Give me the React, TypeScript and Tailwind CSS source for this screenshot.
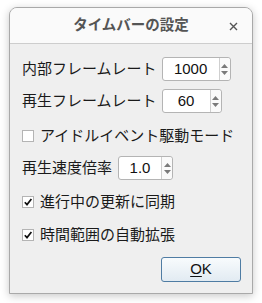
import React from "react";

const font = { fontFamily: '"Liberation Sans", "Noto Sans CJK JP", sans-serif' };

function Spin({ value, w, textW }: { value: string; w: number; textW: number }) {
  return (
    <div
      className="flex h-[24px] rounded-[3px] border border-[#b4b4b4] bg-white box-border"
      style={{ width: w }}
    >
      <div className="flex items-center justify-center text-[15px] text-[#111]" style={{ width: textW }}>
        {value}
      </div>
      <div className="flex flex-1 flex-col items-center justify-center gap-[3px] border-l border-[#cfcfcf] bg-[#fafafa] rounded-r-[3px]">
        <svg width="7" height="4" viewBox="0 0 7 4">
          <path d="M0 4 L3.5 0 L7 4 Z" fill="#7a7a7a" />
        </svg>
        <svg width="7" height="4" viewBox="0 0 7 4">
          <path d="M0 0 L3.5 4 L7 0 Z" fill="#7a7a7a" />
        </svg>
      </div>
    </div>
  );
}

function Check({ checked, label }: { checked: boolean; label: string }) {
  return (
    <div className="flex h-[24px] items-center">
      <div className="flex h-[12px] w-[12px] items-center justify-center border border-[#b4b4b4] bg-white box-border">
        {checked && (
          <svg width="10" height="10" viewBox="0 0 10 10">
            <path d="M1.8 5.2 L4 7.6 L8.4 2" stroke="#111" strokeWidth="1.7" fill="none" />
          </svg>
        )}
      </div>
      <span className="ml-[6px] text-[15px] text-[#1a1a1a]">{label}</span>
    </div>
  );
}

export default function App() {
  return (
    <div className="h-[303px] w-[262px] bg-white pt-[7px] pl-[9px]" style={font}>
      <div className="box-border flex h-[287px] w-[244px] flex-col overflow-hidden rounded-t-[8px] border border-[#a9a9a9] bg-[#efefef] shadow-[0_2px_9px_rgba(0,0,0,0.22)]">
        <div className="relative flex h-[36px] shrink-0 items-center justify-center border-b border-[#cdcdcd] bg-[#fafafa]">
          <span className="text-[14.5px] font-bold text-[#555]">タイムバーの設定</span>
          <svg className="absolute right-[14px] top-[14px]" width="9" height="9" viewBox="0 0 9 9">
            <path d="M1 1 L8 8 M8 1 L1 8" stroke="#555" strokeWidth="1.4" />
          </svg>
        </div>
        <div className="flex flex-col pl-[12px] pt-[13px] text-[#1a1a1a]">
          <div className="flex h-[24px] items-center">
            <span className="text-[15px]">内部フレームレート</span>
            <div className="ml-[5px]">
              <Spin value="1000" w={69} textW={56} />
            </div>
          </div>
          <div className="mt-[8px] flex h-[24px] items-center">
            <span className="text-[15px]">再生フレームレート</span>
            <div className="ml-[5px]">
              <Spin value="60" w={60} textW={47} />
            </div>
          </div>
          <div className="mt-[11px]">
            <Check checked={false} label="アイドルイベント駆動モード" />
          </div>
          <div className="mt-[8px] flex h-[24px] items-center">
            <span className="text-[15px]">再生速度倍率</span>
            <div className="ml-[6px]">
              <Spin value="1.0" w={55} textW={42} />
            </div>
          </div>
          <div className="mt-[10px]">
            <Check checked={true} label="進行中の更新に同期" />
          </div>
          <div className="mt-[9px]">
            <Check checked={true} label="時間範囲の自動拡張" />
          </div>
          <div className="mt-[10px] flex justify-end pr-[11px]">
            <button className="box-border flex h-[25px] w-[80px] items-center justify-center rounded-[3px] border border-[#4f7ca3] bg-gradient-to-b from-[#f8fbfd] to-[#e2ebf2] text-[15px] text-[#111]">
              <span className="underline underline-offset-[2px]">O</span>K
            </button>
          </div>
        </div>
      </div>
    </div>
  );
}
